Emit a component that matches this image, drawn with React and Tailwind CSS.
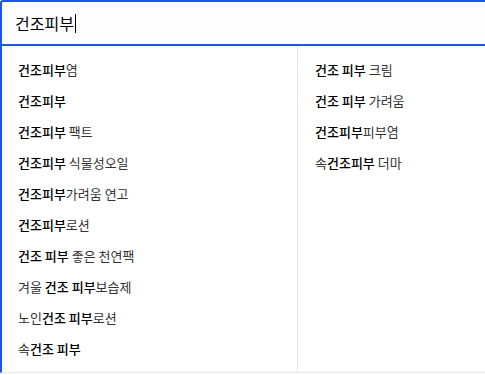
const left = [
  [["건조피부", 1], ["염", 0]],
  [["건조피부", 1]],
  [["건조피부", 1], [" 팩트", 0]],
  [["건조피부", 1], [" 식물성오일", 0]],
  [["건조피부", 1], ["가려움 연고", 0]],
  [["건조피부", 1], ["로션", 0]],
  [["건조 피부", 1], [" 좋은 천연팩", 0]],
  [["겨울 ", 0], ["건조 피부", 1], ["보습제", 0]],
  [["노인", 0], ["건조 피부", 1], ["로션", 0]],
  [["속", 0], ["건조 피부", 1]],
];

const right = [
  [["건조 피부", 1], [" 크림", 0]],
  [["건조 피부", 1], [" 가려움", 0]],
  [["건조피부", 1], ["피부염", 0]],
  [["속", 0], ["건조피부", 1], [" 더마", 0]],
];

const Suggestion = ({ parts }) => (
  <li className="h-[31px] flex items-center whitespace-pre text-[13px] leading-none">
    {parts.map(([text, bold], i) => (
      <span key={i} className={bold ? "font-medium text-black" : "text-[#333]"}>
        {text}
      </span>
    ))}
  </li>
);

export default function App() {
  return (
    <div
      className="w-full h-[375px] bg-white"
      style={{ fontFamily: '"Noto Sans CJK KR", "Noto Sans", sans-serif' }}
    >
      {/* search box */}
      <div className="h-[46px] border-t-2 border-b-2 border-l-2 border-[#1f55e6] rounded-tl-[3px] flex items-center pl-[13px] bg-[#fefefe]">
        <span className="text-[16px] leading-none text-black">건조피부</span>
        <span className="ml-[1px] w-px h-[19px] bg-black" />
      </div>

      {/* suggestions */}
      <div className="grid grid-cols-[295px_1fr] border-l-2 border-[#1f55e6] border-b border-b-[#e5e5e5] h-[327px]">
        <ul className="py-2 pl-4">
          {left.map((p, i) => (
            <Suggestion key={i} parts={p} />
          ))}
        </ul>
        <ul className="py-2 pl-[17px] border-l border-[#e5e5e5]">
          {right.map((p, i) => (
            <Suggestion key={i} parts={p} />
          ))}
        </ul>
      </div>
    </div>
  );
}
